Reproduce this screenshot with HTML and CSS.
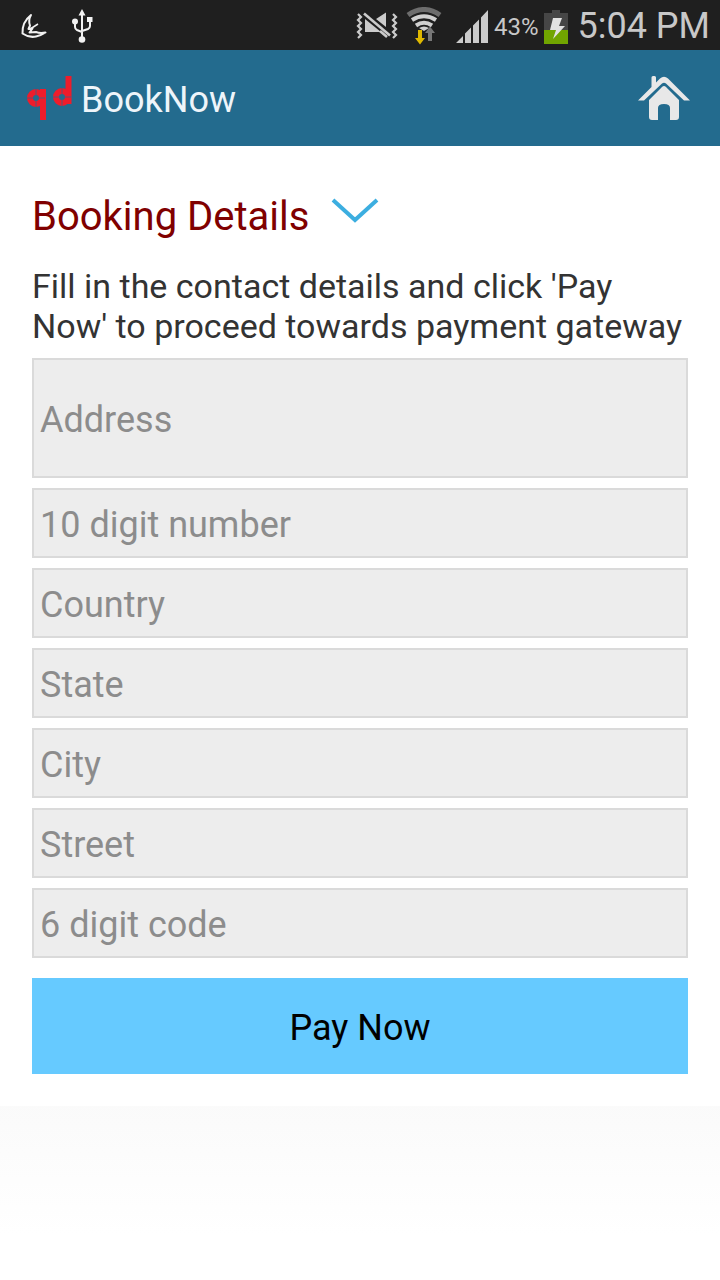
FILE: index.html
```html
<!DOCTYPE html>
<html lang="en">
<head>
<meta charset="utf-8">
<meta name="viewport" content="width=device-width, initial-scale=1">
<title>BookNow</title>
<link rel="stylesheet" href="styles.css">
</head>
<body>
<div class="status">
  <div class="status-left">
    <svg width="28" height="28" viewBox="20 12 28 28" fill="none" stroke="#f2f2f2" stroke-width="2" stroke-linejoin="round"><path d="M31 15Q22 22 22.500 33.500Q29 38 36 36.500Q41 35.500 45.500 32.500Q40 33.500 36 32L29.500 32.500L32.500 28.500L28.500 29L30 25.500Q28 20 31 15Z"/><path d="M31 28.500L38 24" stroke-width="1.500"/></svg>
    <svg width="24" height="36" viewBox="70 8 24 36" fill="none" stroke="#f2f2f2" stroke-width="2"><path d="M82 13V39M75 21V27Q75 29 77 30L82 32M90 20V26Q90 28 88 29L82 31"/><path d="M82 9L85.500 15.500H78.500ZM87 17H92.500V22H87Z" fill="#f2f2f2" stroke="none"/><circle cx="75" cy="21.500" r="3" fill="#f2f2f2" stroke="none"/><circle cx="82" cy="39.500" r="3.300" fill="#f2f2f2" stroke="none"/></svg>
  </div>
  <div class="status-right">
    <svg width="42" height="32" viewBox="357 10 42 32" fill="none" stroke="#cbcbcb" stroke-width="2.200"><path d="M359 14L362 17L359 20L362 23L359 26L362 29L359 32L362 35L359 38M394 14L397 17L394 20L397 23L394 26L397 29L394 32L397 35L394 38"/><path d="M366 19L382 32H366ZM377 19L387 12.500V27Z" fill="#cbcbcb" stroke="none"/><path d="M365 13L391 35" stroke="#1f1f1f" stroke-width="5"/><path d="M365 13.500L391 35.500" stroke-width="2.600"/><path d="M381 31L388 37" stroke-width="2.600"/></svg>
    <svg class="wifi" width="36" height="38" viewBox="407 7 36 38" fill="none"><path d="M409 15Q425 4 441 15" stroke="#6d6d6d" stroke-width="5"/><path d="M413 20Q425 12.500 437 20M417 25.500Q425 20 433 25.500" stroke="#d0d0d0" stroke-width="4"/><path d="M420 28Q425 25 430 28L425 31Z" fill="#d0d0d0"/><path d="M419 30H423V38H426L421 44.500L416 38H419Z" fill="#dfb800"/><path d="M429 41V33H426L431 26.500L436 33H433V41Z" fill="#777"/></svg>
    <svg class="signal" width="34" height="34" viewBox="456 10 34 34" fill="#cbcbcb"><path d="M457 44L464 37V44ZM466 44V34.500L472 28.500V44ZM474 44V26.500L480 20.500V44ZM482 44V18.500L489 11V44Z"/></svg>
    <span class="percent">43%</span>
    <svg class="battery" width="24" height="35" viewBox="543 9 24 35"><path d="M543 13H551V10H559V13H567V44H543Z" fill="#464646"/><path d="M543 30H567V44H543Z" fill="#71a500"/><path d="M552 18H561L558 26H564L552 39L555 30H549Z" fill="#e2e2e2"/></svg>
    <span class="time">5:04 PM</span>
  </div>
</div>
<header class="bar">
  <svg class="logo" width="46" height="46" viewBox="27 75 46 46" fill="none" stroke="#ee1c2b"><circle cx="36" cy="98" r="6" stroke-width="6"/><path d="M43 89V120M68.500 76V104" stroke-width="6"/><circle cx="62" cy="97" r="6" stroke-width="6"/><path d="M36 88V95M36 101V108M26 98H33M62 87V94M62 100V107M52 97H59M39 98H45M65 97H71" stroke="#236b8e" stroke-width="1" opacity=".7"/></svg>
  <h1 class="title">BookNow</h1>
  <button class="home" type="button" aria-label="Home">
    <svg width="52" height="46" viewBox="638 75 52 46" fill="#e8e8e8"><path d="M638 100.500L651.500 87V77.500Q651.500 76 653 76H654.500Q656 76 656 77.500V82.500L660 78.500Q664 75 668 78.500L690 100.500H684L666 83.500Q664 82 662 83.500L644 100.500Z"/><path d="M649 100L662 87Q664 85 666 87L679 100V117Q679 120 676 120H670V108Q670 104 664 104Q658 104 658 108V120H652Q649 120 649 117Z"/></svg>
  </button>
</header>
<main class="page">
  <form class="card">
    <h2 class="heading">Booking Details
      <svg width="48" height="26" viewBox="331 198 48 26" fill="none" stroke="#3caee0" stroke-width="4"><path d="M333 200L355 220L377 200"/></svg>
    </h2>
    <p class="intro">Fill in the contact details and click 'Pay Now' to proceed towards payment gateway</p>
    <div class="fields">
      <input class="field tall" type="text" placeholder="Address" aria-label="Address">
      <input class="field" type="tel" placeholder="10 digit number" aria-label="Phone number">
      <input class="field" type="text" placeholder="Country" aria-label="Country">
      <input class="field" type="text" placeholder="State" aria-label="State">
      <input class="field" type="text" placeholder="City" aria-label="City">
      <input class="field" type="text" placeholder="Street" aria-label="Street">
      <input class="field" type="text" placeholder="6 digit code" aria-label="Postal code">
    </div>
    <button class="pay" type="button">Pay Now</button>
  </form>
</main>
</body>
</html>
```
FILE: styles.css
```css
* { box-sizing: border-box; }
body {
  margin: 0;
  min-height: 100vh;
  display: flex;
  flex-direction: column;
  background: #fff;
  font-family: Roboto, "Liberation Sans", sans-serif;
}
h1, h2, p { margin: 0; font-weight: 400; }
svg { display: block; flex: none; }
.status {
  height: 50px;
  padding: 2px 10px 0 20px;
  display: flex;
  align-items: center;
  justify-content: space-between;
  background: #1f1f1f;
  color: #c8c8c8;
}
.status-left { display: flex; align-items: center; gap: 22px; }
.status-right { display: flex; align-items: center; }
.wifi { margin-left: 8px; }
.signal { margin-left: 13px; }
.percent { margin-left: 5px; padding-top: 2px; font-size: 24px; }
.battery { margin: 0 10px 0 5px; }
.time { font-size: 36px; line-height: 48px; }
.bar {
  height: 96px;
  padding: 0 30px 0 27px;
  display: flex;
  align-items: center;
  background: #236b8e;
}
.title {
  flex: 1;
  margin-left: 8px;
  padding-top: 4px;
  font-size: 36px;
  line-height: 48px;
  color: #eef5fa;
}
.home { padding: 0; border: 0; background: none; }
.page {
  flex: 1;
  background: linear-gradient(#fff 0%, #fafafa 84%, #fff 96%);
}
.card { padding: 47px 32px 32px; background: #fff; }
.heading {
  display: flex;
  align-items: flex-start;
  gap: 22px;
  font-size: 40px;
  line-height: 48px;
  color: #800000;
}
.heading svg { margin-top: 5px; }
.intro {
  margin-top: 25px;
  font-size: 34px;
  line-height: 40px;
  color: #333;
}
.fields { display: flex; flex-direction: column; gap: 10px; margin-top: 12px; }
.field {
  width: 100%;
  height: 70px;
  padding: 4px 6px 0;
  border: 2px solid #dadada;
  border-radius: 0;
  background: #ededed;
  font: inherit;
  font-size: 36px;
  color: #333;
}
.field.tall { height: 120px; }
.field::placeholder { color: #8c8c8c; opacity: 1; }
.pay {
  display: block;
  width: 100%;
  height: 96px;
  margin-top: 20px;
  padding-top: 4px;
  border: 0;
  background: #66caff;
  font: inherit;
  font-size: 36px;
  color: #000;
}
```
